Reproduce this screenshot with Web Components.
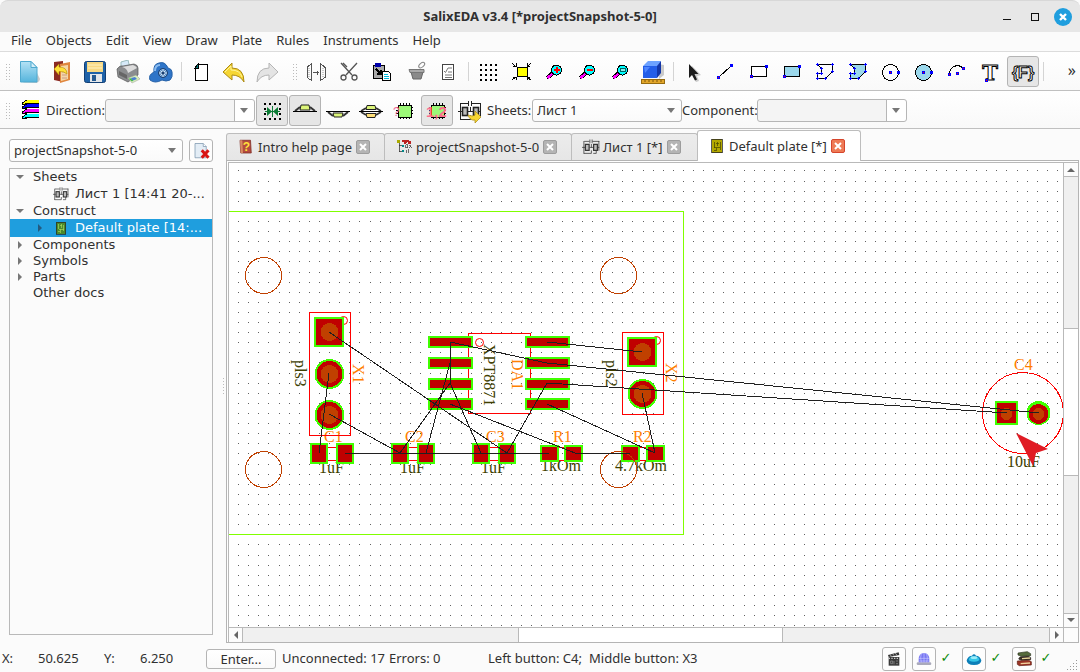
<!DOCTYPE html>
<html lang="en">
<head>
<meta charset="utf-8">
<title>SalixEDA v3.4</title>
<style>
  html, body { height: 100%; margin: 0; }
  body { background: #fbfbfb; color: #303030; font: 13px/18px "Noto Sans", sans-serif; overflow: hidden; }
</style>
</head>
<body>
<eda-app></eda-app>
<script>
const define = (name, css, html, init) => {
  const tpl = document.createElement('template');
  tpl.innerHTML = `<style>*{box-sizing:border-box}:host{display:block;box-sizing:border-box}button,select{font:inherit;color:inherit;margin:0;padding:0}${css}</style>`;
  customElements.define(name, class extends HTMLElement {
    constructor() { super(); this.attachShadow({ mode: 'open' }); }
    connectedCallback() {
      if (this.shadowRoot.childNodes.length) return;
      const t = tpl.cloneNode(true);
      t.innerHTML += typeof html === 'function' ? html(this) : html;
      this.shadowRoot.append(t.content.cloneNode(true));
      if (init) init(this, this.shadowRoot);
    }
  });
};

/* ---------- icons, on a 24 x 24 grid ---------- */
const crisp = 'shape-rendering="crispEdges"';
const node = (x, y, red) => `<rect x="${x - 1}" y="${y - 1}" width="3" height="3" fill="#00f"/>${red ? `<rect x="${x}" y="${y}" width="1" height="1" fill="#f00"/>` : ''}`;
const poly = fill => `<g ${crisp}><path d="M4.500 4.500H19.500V11.500L12.500 18.500H4.500V13.500H8.500V8.500Z" fill="${fill}" stroke="#000"/>` +
  [[4, 4], [19, 4], [19, 11], [12, 18], [4, 18], [4, 13], [8, 13], [8, 8]].map(([x, y]) => `<path d="M${x - 1} ${y}h3v1h-3zM${x} ${y - 1}h1v3h-1z" fill="#00f"/>`).join('') + '</g>';
const lens = inner => `<g ${crisp}><path d="M5 18l6-5" stroke="#000" stroke-width="4"/><path d="M5.500 18l5-4.500" stroke="#f0f" stroke-width="2.400"/><circle cx="14.500" cy="10" r="5" fill="#0ff" stroke="#000"/>${inner}</g>`;
const chip = t => `<g ${crisp}><path d="M8.500 4v16M11.500 4v16M14.500 4v16M17.500 4v16M4 8.500h17M4 11.500h17M4 14.500h17" stroke="#000"/><path d="M6 6.500h13.500v12h-13.500z" fill="#9cf878" stroke="#000"/></g>${t}`;
const sch = c => `<g fill="none" stroke="${c}"><path d="M3 4.500h7M14 4.500h9M10.500 2v5M13.500 2v5M2.500 4v17M22.500 4v13M2.500 20.500h10v-4M15 20.500h4v-4"/><rect x="4.500" y="8.500" width="5" height="8" fill="#bbb" stroke-width="1.600"/><rect x="15.500" y="8.500" width="5" height="8" fill="#bbb" stroke-width="1.600"/><path d="M0 12.500h4M10 12.500h5M21 12.500h2M12.500 8v5"/></g>`;
const plate = (a, b) => `<g ${crisp}><rect x="5" y="3" width="14" height="18" fill="${a}" stroke="#222"/><path d="M8.500 6v8h3v5M12 6v6M16 7v10M8 17.500h2M12 14.500h4M10 8.500h4" stroke="${b}" fill="none"/></g>`;
const dots = [4, 9, 14, 19].map(x => [4, 9, 14, 19].map(y => `<rect x="${x}" y="${y}" width="2" height="2"/>`).join('')).join('');
const ICONS = {
  new: `<defs><linearGradient id="g" x2="0" y2="1"><stop stop-color="#b5e2f5"/><stop offset="1" stop-color="#55b4dc"/></linearGradient></defs><path d="M6 22.500L20 23q3-2 3-4l-3-6z" fill="#999" opacity=".5"/><path d="M3.500 1.500H14l6 6V22H3.500z" fill="url(#g)" stroke="#4fa9cf"/><path d="M14 1.500v6h6z" fill="#d4eef9" stroke="#4fa9cf"/>`,
  open: `<path d="M4 2l9-1v21l-9-2z" fill="#8c2b23"/><path d="M10 4l10-2v18l-10 3z" fill="#e0863e"/><path d="M11 6l7-1v14l-7 2z" fill="#f4d7a5"/><path d="M12 12h5M12 15h5M12 18h5" stroke="#c98"/><path d="M4 9l5-5v3q8 0 8 7-3-3-8-2.500V15z" fill="#ffe13a" stroke="#b58a00" stroke-width=".6"/>`,
  save: `<rect x="1.500" y="1.500" width="21" height="21" rx="2" fill="#1f62a8" stroke="#123f74"/><path d="M4 2h16v10H4z" fill="#f7d984"/><path d="M5 5h14M5 8h14" stroke="#fff2c4"/><rect x="7" y="14" width="12" height="8" fill="#e3e7ea"/><rect x="9" y="15" width="4" height="6" fill="#255a90"/>`,
  print: `<path d="M5 8V2l7-2 2 8z" fill="#d6e9f8" stroke="#9bb"/><path d="M1 9q3-4 6-3l11-2q4 1 4 4v7l-10 7-10-5z" fill="#8b8d8f" stroke="#555" stroke-width=".7"/><path d="M6 7l11-2q3 1 4 3l-9 5q-1-5-6-6z" fill="#dcdcdc"/><path d="M3 11l8 4v4l-8-4z" fill="#666"/><path d="M12 18l8-3 4 4-8 4z" fill="#d7efb8" stroke="#999" stroke-width=".5"/><path d="M15 18l4-1 2 2-5 2z" fill="#4c80cf"/><path d="M13.500 18.500l3 2.500" stroke="#3db83d" stroke-width="1.500"/>`,
  cloud: `<path d="M1 20q-2-5 4-8-1-8 5-9 6-2 9 5 4 1 4 4 1 5-2 8-4 2-8 0-7 4-12 0z" fill="#2f75c8" stroke="#2762a8"/><path d="M6 11q0-6 5-6" stroke="#8abcf0" stroke-width="2" fill="none"/><circle cx="14" cy="13" r="4.500" fill="#5f93c8" stroke="#1c3f70"/><path d="M14 9v8M10 13h8M11.500 10.500l5 5M16.500 10.500l-5 5" stroke="#dce8f4"/><circle cx="14" cy="13" r="1.500" fill="#1c3f70"/>`,
  page: `<g ${crisp}><path d="M9.500 4.500H18V20.500H6V8z" fill="#fff" stroke="#000"/><path d="M6 8l3-4v4z" fill="#087878" stroke="#000"/></g>`,
  undo: `<path d="M1 12L10 3v5q12 0 12 14-4-7-12-7v5z" fill="#f6d634" stroke="#ad8a12"/><path d="M3 12l6-6v4q9 0 11 7" stroke="#fff49a" fill="none"/>`,
  redo: `<path d="M23 12L14 3v5Q2 8 2 22q4-7 12-7v5z" fill="#e4e4e4" stroke="#b5b5b5"/>`,
  mirror: `<g fill="none" stroke="#555" ${crisp}><path d="M7.500 3v18M7.500 3.500L3 7.500v10l4.500 3M16.500 3v18M16.500 3.500L21 7.500v10l-4.500 3M9 12.500h6M13.500 10.500v4"/></g><path d="M5 8v9M19 8v9" stroke="#999" stroke-dasharray="1 1"/>`,
  cut: `<g fill="none" stroke="#555" stroke-width="1.300"><path d="M4 3l11 12M20 3L9 15M6 3l4 4"/><circle cx="6.500" cy="17.500" r="2.500"/><circle cx="17.500" cy="17.500" r="2.500"/></g>`,
  paste: `<g ${crisp}><rect x="3.500" y="5.500" width="11" height="13" fill="#aaa" stroke="#000"/><rect x="5" y="3" width="6" height="4" fill="#00a"/><path d="M6 9l5 5M11 10v4h-4" stroke="#000" stroke-width="1.500" fill="none"/><path d="M12.500 11.500h6l2 2v7h-8z" fill="#fff" stroke="#000"/><path d="M14 14.500h4M14 16.500h5M14 18.500h5" stroke="#0bd"/></g>`,
  bin: `<path d="M8 12h12l-2 7H10z" fill="#8a8a8a" stroke="#666"/><path d="M6 9.500h15v3H7z" fill="#aaa" stroke="#777"/><ellipse cx="18.500" cy="5.500" rx="3.500" ry="2" fill="none" stroke="#888" transform="rotate(-40 18 5)"/>`,
  list: `<rect x="6.500" y="4.500" width="11" height="15" fill="#fff" stroke="#444"/><path d="M8 11l1.500 1.500L12 8M12 8h4M12 12h4M9 15h7M9 17.500h7" stroke="#777" fill="none"/>`,
  grid: `<g ${crisp}>${dots}</g>`,
  fit: `<g ${crisp}><rect x="8" y="7.500" width="10" height="9" fill="#ff0" stroke="#000"/><path d="M3 3l4 4M22 3l-4 4M3 20l4-3M22 20l-4-3" stroke="#000"/><path d="M4 6h3v-3M21 6h-3v-3M4 17h3v3M21 17h-3v3" stroke="#000" fill="none"/></g>`,
  zin: lens('<path d="M11.500 10h6M14.500 7v6" stroke="#f00" stroke-width="2"/>'),
  zout: lens('<path d="M11.500 10h6" stroke="#f00" stroke-width="2"/>'),
  zbox: lens('<rect x="12" y="8.500" width="5" height="3" fill="#8ee" stroke="#066"/>'),
  cube: `<path d="M17 4l6 1v10l-5 4z" fill="#999" opacity=".5"/><path d="M2 6l5-5h13l-3 5z" fill="#6da2ff"/><path d="M2 6h14v12H2z" fill="#245ee8"/><path d="M16 6l4-5v12l-4 5z" fill="#1437a8"/><path d="M3 7h6l-5 6z" fill="#4e86ff"/><rect x=".5" y="19.500" width="23" height="4" fill="#e2a62a" stroke="#966b10"/><path d="M4 20v2M8 20v2M12 20v2M16 20v2M20 20v2" stroke="#7c560c"/>`,
  cursor: `<path d="M11 6l9 9-4 1 2 5-3 1-3-5z" fill="#999" opacity=".5"/><path d="M8 4v14l3-3 3 5.500 2-1-2.500-5.500h4z" fill="#1c1c1c"/>`,
  line: `<g ${crisp}><path d="M4.500 17.500L17.500 5.500" stroke="#000"/>${node(4, 17, 1)}${node(17, 5)}</g>`,
  rect: `<g ${crisp}><rect x="4.500" y="6.500" width="15" height="10" fill="#fff" stroke="#000"/>${node(4, 16, 1)}${node(19, 6)}</g>`,
  frect: `<g ${crisp}><rect x="4.500" y="6.500" width="15" height="10" fill="#9bd8ec" stroke="#000"/>${node(4, 16, 1)}${node(19, 6)}</g>`,
  poly: poly('none'), fpoly: poly('#9bd8ec'),
  circ: `<g ${crisp}><circle cx="11.500" cy="12.500" r="8" fill="none" stroke="#000"/>${node(11, 12, 1)}${node(19, 12)}</g>`,
  fcirc: `<g ${crisp}><circle cx="11.500" cy="12.500" r="8" fill="#9bd8ec" stroke="#000"/>${node(11, 12, 1)}${node(19, 12)}</g>`,
  arc: `<g ${crisp}><path d="M4.500 14.500A8 8 0 0 1 18.500 8.500" fill="none" stroke="#000"/>${node(4, 14, 1)}${node(18, 8, 1)}${node(12, 13, 1)}</g>`,
  text: `<text x="12" y="20" text-anchor="middle" font-family="DejaVu Serif, serif" font-weight="bold" font-size="21" fill="#fff" stroke="#000">T</text><g ${crisp}>${node(8, 20, 1)}</g>`,
  field: `<text x="12" y="18" text-anchor="middle" font-family="Liberation Sans, sans-serif" font-weight="bold" font-size="16" fill="#fff" stroke="#000">{F}</text>`,
  layers: `<g ${crisp}>${[[14, '#0ff'], [9, '#f0f'], [4, '#00f'], [0, '#ff0']].map(([y, c]) => `<path d="M5 ${y + 5}L10 ${y + 1}H22V${y + 5}H9Z" fill="${c}"/><path d="M10 ${y + 1}L5 ${y + 4}v1h5l-2-1h14" fill="none" stroke="#000"/>`).join('')}</g>`,
  flip: `<g ${crisp}>${dots}</g><path d="M4 8h17v10h-17z" fill="#e6e6e6"/><path d="M7 8l5 4.500L7 17zM18 8l-5 4.500L18 17z" fill="#0a7a33"/><path d="M12.500 7v11M5 12.500h15" stroke="#0a7a33"/><g ${crisp}><path d="M4 9h2v2h-2zM4 14h2v2h-2zM19 9h2v2h-2zM19 14h2v2h-2z"/></g>`,
  top: `<path d="M2 12l5-4M22 12l-5-4" stroke="#333" stroke-width="2"/><path d="M7 11l1-5h8l1 5z" fill="#dcf57a" stroke="#222"/><path d="M0 12.500h24" stroke="#000"/>`,
  bottom: `<path d="M2 13l5 4M22 13l-5 4" stroke="#333" stroke-width="2"/><path d="M7 14h10l-1 4h-8z" fill="#dcf57a" stroke="#222"/><path d="M0 12.500h24" stroke="#000"/>`,
  both: `<path d="M2 12l5-3M22 12l-5-3M2 13l5 3M22 13l-5 3" stroke="#333" stroke-width="1.600"/><path d="M8 6.500h8l1 4h-10z" fill="#dcf57a" stroke="#222"/><path d="M7 14.500h10l-1 4h-8z" fill="#ffdf7a" stroke="#222"/><path d="M0 12.500h24" stroke="#000"/>`,
  chipq: chip('<text x="1" y="17" font-family="Liberation Sans, sans-serif" font-size="12" fill="#f06a9a">?</text>'),
  chip12: chip('<text x="1" y="18" font-family="Liberation Sans, sans-serif" font-size="15" font-weight="bold" fill="#ff6f8f">1,2</text>'),
  schgo: sch('#222') + '<path d="M10 16q5 2 7 0v-4l6 6-6 6v-3q-5 1-7-5z" fill="#f6d634" stroke="#a8860e" stroke-width=".7"/>',
  sch: sch('#333'),
  plate: plate('#b3a800', '#4a4a00'), platedim: plate('#4c8a2c', '#a8d860'),
  help: `<path d="M4 3h14l1 17H5z" fill="#b54c3e" stroke="#7a2a22"/><path d="M4 3h3l1 17H5z" fill="#d98b62"/><text x="12.500" y="17" text-anchor="middle" font-family="Liberation Sans, sans-serif" font-weight="bold" font-size="16" fill="#ffe23a">?</text>`,
  proj: `<g ${crisp}><path d="M5.500 4v14M5.500 10.500h5M5.500 17.500h5" stroke="#333" fill="none"/><rect x="3" y="3" width="4" height="3" fill="#aa0"/><path d="M9 4h4v4M15 7v-3h3v4M20 4v4" stroke="#b22" stroke-width="2" fill="none"/><rect x="9" y="9" width="3" height="3" fill="#088"/><path d="M14 9v4h3v-4zM19 9l3 4M22 9l-3 4M15 16v4M18 15v5" stroke="#444" fill="none"/><rect x="9" y="16" width="3" height="3" fill="#088"/></g>`,
  delsheet: `<path d="M4 2h11l4 4v15H4z" fill="#e3edf6" stroke="#7c95ad"/><path d="M15 2v4h4" fill="#fff" stroke="#7c95ad"/><path d="M13 11l9 10M22 11l-9 10" stroke="#d81414" stroke-width="4"/>`,
  film: `<path d="M3 6L19 2l1 4L4 9z" fill="#333"/><path d="M6 5l2 3M10 4l2 3M14 3l2 3" stroke="#ddd"/><rect x="4" y="9" width="16" height="13" fill="#3a3a3a"/><path d="M4 11h16" stroke="#ccc" stroke-dasharray="2 2" stroke-width="2"/><path d="M7 15h3v4h-3zM12 15v5M15 15h3M15 19h3" stroke="#999" fill="none"/>`,
  net: `<rect x="1" y="17" width="22" height="4" rx="2" fill="#aab"/><path d="M4 17v-4q0-10 8-10t8 10v4z" fill="#7776f2"/><path d="M4 11h16M5 15h14M12 3v14M8 4q-2 6 0 13M16 4q2 6 0 13" stroke="#c9c9ff" fill="none"/>`,
  gem: `<path d="M1 14q2-7 8-7 3-4 6 0 6 0 8 7 0 7-11 7T1 14z" fill="#0d7fb8"/><path d="M4 12q2-4 6-4h4q4 0 6 4 0 4-8 4t-8-4z" fill="#35c6e8"/><ellipse cx="12" cy="10" rx="5" ry="2" fill="#9becf8"/>`,
  books: `<path d="M3 3l14-2 5 3v3l-14 1-5-2z" fill="#566b3d" stroke="#2d3520"/><path d="M6 9l13-1 3 2v3L8 14l-4-2z" fill="#3b3026" stroke="#1f1812"/><path d="M9 11.500l12-1" stroke="#e9d59b" stroke-width="2"/><path d="M2 15l17-1 4 2v5l-18 1-3-2z" fill="#9c3526" stroke="#5d1c12"/><path d="M7 19l14-1" stroke="#efcf9b" stroke-width="2"/>`
};
define('eda-icon', ':host{flex:none;width:24px;height:24px}:host([small]){width:16px;height:16px}:host([mid]){width:18px;height:18px}svg{display:block;width:100%;height:100%}',
  el => `<svg viewBox="0 0 24 24" aria-hidden="true">${ICONS[el.getAttribute('name')]}</svg>`);

/* ---------- window chrome ---------- */
define('eda-titlebar', `:host{display:grid;grid-template-columns:1fr auto 1fr;align-items:center;height:32px;background:#e7e7e7;border-top:1px solid #d8d8d8;border-radius:8px 8px 0 0}
  h1{grid-column:2;margin:0;padding-bottom:2px;font:bold 13px/18px "Noto Sans",sans-serif}
  nav{display:flex;justify-content:flex-end;gap:10px;padding-right:8px}
  button{width:18px;height:18px;border:0;background:none;display:block}svg{display:block}`,
  `<h1><slot></slot></h1><nav>
  <button aria-label="Minimize"><svg width="18" height="18"><path d="M5 11.500h8" stroke="#111"/></svg></button>
  <button aria-label="Maximize"><svg width="18" height="18"><rect x="5.500" y="5.500" width="7" height="7" fill="none" stroke="#111"/></svg></button>
  <button aria-label="Close"><svg width="18" height="18"><circle cx="9" cy="9" r="9" fill="#1f9ede"/><path d="M6 6l6 6M12 6l-6 6" stroke="#fff" stroke-width="2.400"/></svg></button></nav>`);

define('eda-menubar', `:host{display:flex;height:20px;padding-left:4px;background:#fbfbfb;border-bottom:1px solid #dcdcdc}
  button{border:0;background:none;padding:0 7px;line-height:16px;height:18px;padding-bottom:2px}`,
  el => el.getAttribute('items').split(',').map(t => `<button>${t}</button>`).join(''));

define('eda-toolbar', ':host{display:flex;align-items:flex-start;height:39px;padding-top:4px;background:linear-gradient(#fff,#f9f9f9);border-bottom:1px solid #c0c0c0}:host([second]){height:38px}', '<slot></slot>');
define('eda-grip', ':host{width:13px;height:31px;display:flex;align-items:center;padding-left:5px}:host([mid]){width:16px;padding-left:8px}i{width:5px;height:17px;background:radial-gradient(circle,#bbb 1px,transparent 1px) 0 0/3px 3px}', '<i></i>');
define('eda-sep', ':host{width:7px;height:31px;padding:6px 3px}i{display:block;width:1px;height:19px;background:#d4d4d4}', '<i></i>');
define('eda-tool', `:host{flex:none;margin-right:1px}button{display:block;width:32px;height:31px;padding:2px 3px;border:1px solid transparent;border-radius:3px;background:none}
  :host([on]) button{background:#e6e6e6;border-color:#b4b4b4}`,
  el => `<button aria-label="${el.getAttribute('icon')}"><eda-icon name="${el.getAttribute('icon')}"></eda-icon></button>`);

define('eda-combo', `:host{display:flex;align-items:center;height:31px}
  label{flex:none;width:var(--label,0);white-space:nowrap;padding-bottom:2px}
  div{position:relative;width:var(--field,150px);height:23px;flex:auto}
  select{appearance:none;width:100%;height:100%;border:1px solid #b6b6b6;border-radius:3px;background:linear-gradient(#fff,#fafafa);padding:0 20px 2px 4px;line-height:18px}
  :host([editable]) select{background:linear-gradient(90deg,#f4f4f4 calc(100% - 20px),#b6b6b6 calc(100% - 20px),#b6b6b6 calc(100% - 19px),#fff calc(100% - 19px))}
  svg{position:absolute;right:7px;top:9px;pointer-events:none}`,
  el => `${el.hasAttribute('label') ? `<label for="s">${el.getAttribute('label')}</label>` : ''}<div><select id="s" aria-label="${el.getAttribute('label') || 'Project'}"><option>${el.getAttribute('value') || ''}</option></select><svg width="8" height="5"><path d="M0 0h8L4 5z" fill="#777"/></svg></div>`);

/* ---------- project tree ---------- */
define('eda-tree', ':host{border:1px solid #b9b9b9;overflow:hidden;font:13px/16px "DejaVu Sans",sans-serif}', '<slot></slot>');
define('eda-tree-row', `:host{display:flex;align-items:center;height:16px;padding-left:6px;white-space:nowrap}
  :host([leaf]){height:18px;padding-left:26px}:host([on]){background:#1f9ede;color:#fff}
  .a{flex:none;width:8px;height:8px;margin-right:9px}.a svg{display:block}
  eda-icon{margin-right:6px}`,
  el => { const s = el.getAttribute('state'), c = el.hasAttribute('on') ? '#235a80' : '#777', i = el.getAttribute('icon');
    return `<span class="a">${s ? `<svg width="8" height="8"><path d="${s === 'open' ? 'M0 2h8L4 6z' : 'M2 0v8l4-4z'}" fill="${c}"/></svg>` : ''}</span>${i ? `<eda-icon small name="${i}"></eda-icon>` : ''}<span><slot></slot></span>`; });

/* ---------- tabs ---------- */
define('eda-tabs', ':host{display:flex;align-items:flex-end;height:31px;flex:none;border-bottom:1px solid #b4b4b4}', '<slot></slot>');
define('eda-tab', `:host{display:flex;align-items:center;flex:none;height:27px;width:var(--w);padding-left:10px;margin-left:-1px;border:1px solid #bdbdbd;border-bottom:0;border-radius:3px 3px 0 0;background:linear-gradient(#ececec,#e6e6e6)}
  :host(:first-child){margin-left:0}:host([on]){height:31px;background:#fff;margin-bottom:-1px}
  button{border:0;background:none;display:flex;align-items:center;white-space:nowrap;gap:3px}
  .x{width:14px;height:14px;margin-left:4px;border-radius:2px;background:#b4b4b4;border:1px solid #9c9c9c;justify-content:center}
  :host([on]) .x{background:#ee7a55;border-color:#d6452c}`,
  el => `<button role="tab"><eda-icon mid name="${el.getAttribute('icon')}"></eda-icon><slot></slot></button><button class="x" aria-label="Close tab"><svg width="8" height="8"><path d="M1 1l6 6M7 1l-6 6" stroke="#fff" stroke-width="2"/></svg></button>`);

/* ---------- scroll bars ---------- */
define('eda-scroll', `:host{display:flex;background:#f0f0f0;border:0 solid #b9b9b9}
  :host([dir=h]){border-top-width:1px;height:15px}:host([dir=v]){flex-direction:column;border-left-width:1px;width:15px}
  b{flex:none;width:14px;height:14px;background:#fcfcfc;display:grid;place-items:center}
  i{flex:var(--a) 0 0}i.e{flex:var(--c) 0 0}u{flex:var(--b) 0 0;background:#fff}
  b,i,i.e,u{border:0 solid #b9b9b9}:host([dir=h]) :is(b:first-of-type,i:not(.e),u){border-right-width:1px}:host([dir=h]) b:last-of-type{border-left-width:1px}
  :host([dir=v]) :is(b:first-of-type,i:not(.e),u){border-bottom-width:1px}:host([dir=v]) b:last-of-type{border-top-width:1px}`,
  el => { const h = el.getAttribute('dir') === 'h', a = d => `<b><svg width="8" height="8"><path d="${d}" fill="#666"/></svg></b>`;
    return `${a(h ? 'M6 0v8L2 4z' : 'M0 6h8L4 2z')}<i></i><u></u><i class="e"></i>${a(h ? 'M2 0v8l4-4z' : 'M0 2h8L4 6z')}`; });

const RED = '#c00000', GREEN = '#40ff00', CORE = '#c04000';
const pad = (x, y, w, h) => `<rect x="${x}" y="${y}" width="${w}" height="${h}" fill="${GREEN}"/><rect x="${x + 2}" y="${y + 2}" width="${w - 4}" height="${h - 4}" fill="${RED}"/>`;
const disc = (x, y, r, f) => `<circle cx="${x}.5" cy="${y}" r="${r}" fill="${f}"/>`;
const silk = (x, y, w, h) => `<rect x="${x}.5" y="${y}.5" width="${w}" height="${h}" fill="none" stroke="#f00"/>`;
const ring = (x, y, r, c) => `<circle cx="${x}.5" cy="${y}.5" r="${r}" fill="none" stroke="${c}"${r < 9 ? ' shape-rendering="auto"' : ''}/>`;
const wire = p => `<polyline points="${p}" fill="none" stroke="#202020"/>`;
const txt = (x, y, s, c, rot) => `<text transform="translate(${x} ${y})${rot ? ' rotate(90)' : ''}" fill="${c === 'n' ? '#ff8000' : '#404000'}">${s}</text>`;
define('eda-board', ':host{background:#fff;overflow:hidden;min-width:0;min-height:0}svg{display:block;width:100%;height:100%}text{font:16px "Liberation Serif",serif}', () => {
  let grid = '';
  for (let j = 0; j < 120; j++) for (let i = 0; i < 200; i++) grid += `M${238 + Math.floor(.6 + i * 10.11)} ${170 + Math.floor(.9 + j * 10.11)}h1v1h-1z`;
  const sq = (x, y) => pad(x - 15, y - 15, 30, 30) + disc(x, y, 9, CORE);
  const rd = (x, y) => disc(x, y, 15, GREEN) + disc(x, y, 13, RED) + disc(x, y, 9, CORE);
  return `<svg role="img" aria-label="Default plate"><g transform="translate(-229 -163)">
  <g ${crisp}><path d="${grid}" fill="#606060"/>
  <path d="M229 211.500H683.500V534.500H229" fill="none" stroke="#80ff00"/></g>
  <g>${txt(295, 360, 'pls3', 'v', 1)}${txt(353, 364, 'X1', 'n', 1)}${txt(484, 344, 'XPT8871', 'v', 1)}${txt(512, 359, 'DA1', 'n', 1)}${txt(606, 360, 'pls2', 'v', 1)}${txt(666, 363, 'X2', 'n', 1)}
  ${txt(324, 442, 'C1', 'n')}${txt(405, 442, 'C2', 'n')}${txt(486, 442, 'C3', 'n')}${txt(553, 442, 'R1', 'n')}${txt(633, 442, 'R2', 'n')}${txt(1014, 370, 'C4', 'n')}
  ${txt(319, 473, '1uF', 'v')}${txt(400, 473, '1uF', 'v')}${txt(481, 473, '1uF', 'v')}${txt(541, 471, '1kOm', 'v')}${txt(615, 471, '4.7kOm', 'v')}${txt(1007, 467, '10uF', 'v')}</g>
  <g ${crisp}>${silk(309, 312, 41, 123)}${ring(343, 320, 4, '#f00')}${silk(622, 332, 41, 82)}${ring(656, 340, 4, '#f00')}${silk(468, 333, 62, 80)}${ring(479, 342, 4, '#f00')}
  ${[319, 400, 481, 549, 631].map(x => silk(x, 447, 26, 13)).join('')}
  <circle cx="1023" cy="413" r="40.500" fill="none" stroke="#f00"/>
  ${sq(329, 332)}${rd(329, 374)}${rd(329, 415)}${sq(642, 352)}${rd(642, 394)}
  ${[336, 357, 378, 398].map(y => pad(428, y, 45, 12) + pad(525, y, 45, 12)).join('')}
  ${[310, 336, 391, 417, 472, 498].map(x => pad(x, 443, 18, 21)).join('')}
  ${[540, 564, 621, 646].map(x => pad(x, 445, 19, 17)).join('')}
  ${pad(995, 401, 23, 24)}${disc(1006, 414, 6, CORE)}${disc(1038, 413, 12, GREEN)}${disc(1038, 414, 10, RED)}${disc(1038, 414, 6, CORE)}
  ${ring(263, 275, 18, CORE)}${ring(618, 275, 18, CORE)}${ring(263, 469, 18, CORE)}${ring(618, 469, 18, CORE)}
  ${wire('329,332 507,453')}${wire('329,373 319,453')}${wire('329,414 400,453')}${wire('345,453.5 549,453.5')}${wire('575,453.5 630,453.5')}
  ${wire('450,383 450,342 547,363 1039,413')}${wire('547,383 1007,413')}${wire('450,363 426,453')}${wire('400,453 450,383 481,453')}${wire('450,404 575,453')}
  ${wire('547,342 642,352')}${wire('547,383 507,453')}${wire('547,404 655,453')}${wire('642,393 655,453')}</g>
  <path d="M1016 433L1048 449L1036 453L1033 466Z" fill="#e01b24"/></g></svg>`;
});

/* ---------- status bar ---------- */
define('eda-statusbar', `:host{display:flex;align-items:center;height:29px;padding:3px 0 0 2px;flex:none;white-space:nowrap}
  span{flex:none;padding-bottom:2px}.l{width:36px}.v{width:66px}
  .enter{width:70px;height:20px;line-height:16px;border:1px solid #b4b4b4;border-radius:3px;background:linear-gradient(#fff,#fafafa);margin-right:6px}
  .un{width:107px}.er{width:99px}.lb{width:101px}.sp{flex:1}
  .ib{width:24px;height:24px;border:1px solid #b4b4b4;border-radius:3px;background:#fdfdfd;display:grid;place-items:center;margin-left:6px}
  .ok{width:20px;text-align:center;color:#0a8a0a;font:bold 13px/18px "DejaVu Sans",sans-serif}
  .g{width:11px;height:11px;margin:12px 2px 0 11px}`,
  `<span class="l">X:</span><span class="v">50.625</span><span class="l">Y:</span><span class="v">6.250</span><button class="enter">Enter...</button>
  <span class="un">Unconnected: 17</span><span class="er">Errors: 0</span><span class="lb">Left button: C4;</span><span>Middle button: X3</span><span class="sp"></span>
  <button class="ib" aria-label="Movie"><eda-icon small name="film"></eda-icon></button><button class="ib" aria-label="Network"><eda-icon small name="net"></eda-icon></button><span class="ok">✓</span>
  <button class="ib" aria-label="Cloud"><eda-icon small name="gem"></eda-icon></button><span class="ok">✓</span><button class="ib" aria-label="Library"><eda-icon small name="books"></eda-icon></button><span class="ok">✓</span>
  <svg class="g" ${crisp}><path d="M9 0h1v1h-1zM6 3h1v1h-1zM9 3h1v1h-1zM3 6h1v1h-1zM6 6h1v1h-1zM9 6h1v1h-1zM0 9h1v1h-1zM3 9h1v1h-1zM6 9h1v1h-1zM9 9h1v1h-1z" fill="#999"/></svg>`);

/* ---------- whole window ---------- */
const tools = s => s.split(' ').map(n => n === '|' ? '<eda-sep></eda-sep>' : n === ':' ? '<eda-grip mid></eda-grip>' : `<eda-tool icon="${n.replace('!', '')}"${n.includes('!') ? ' on' : ''}></eda-tool>`).join('');
define('eda-app', `:host{display:flex;flex-direction:column;height:100vh}
  main{flex:1;display:flex;min-height:0}
  aside{width:204px;margin:10px 0 8px 9px;display:flex;flex-direction:column;flex:none}
  .pick{display:flex;gap:6px;height:23px;margin-bottom:6px}.pick eda-combo{--field:174px;height:23px;flex:1}
  .del{width:24px;height:23px;border:1px solid #b4b4b4;border-radius:3px;background:#fdfdfd;display:grid;place-items:center}
  eda-tree{flex:1}
  .split{width:13px;display:grid;place-items:center}.split i{width:1px;height:17px;margin-left:8px;background:repeating-linear-gradient(#bbb 0 1px,transparent 1px 3px)}
  .work{flex:1;min-width:0;display:flex;flex-direction:column;margin-right:1px;padding-top:1px}
  .frame{flex:1;min-height:0;border:1px solid #b4b4b4;border-top:0;padding:1px 0 0 1px;display:flex;background:#fff}
  .view{flex:1;min-width:0;display:grid;grid-template:1fr 15px / 1fr 15px;border:1px solid #b9b9b9;border-width:1px 0 0 1px}
  .more{margin-left:auto;padding:0 4px 3px 0;border:0;background:none;height:31px;font-size:16px}
  .corner{border:1px solid #b9b9b9;border-width:1px 0 0 1px;background:#fcfcfc}
  .c1{margin-right:1px}`,
  `<eda-titlebar>SalixEDA v3.4 [*projectSnapshot-5-0]</eda-titlebar>
  <eda-menubar items="File,Objects,Edit,View,Draw,Plate,Rules,Instruments,Help"></eda-menubar>
  <eda-toolbar><eda-grip></eda-grip>${tools('new open save print cloud | page undo redo : mirror cut paste bin list | grid fit zin zout zbox cube | cursor line rect frect poly fpoly circ fcirc arc text field! |')}<button class="more">»</button></eda-toolbar>
  <eda-toolbar second><eda-grip></eda-grip>${tools('layers')}<eda-combo class="c1" label="Direction:" editable style="--label:59px"></eda-combo>${tools('flip! top! bottom both chipq chip12! schgo')}<eda-combo label="Sheets:" value="Лист 1" style="--label:45px"></eda-combo><eda-combo label="Component:" editable style="--label:75px"></eda-combo></eda-toolbar>
  <main><aside><div class="pick"><eda-combo value="projectSnapshot-5-0"></eda-combo><button class="del" aria-label="Delete"><eda-icon mid name="delsheet"></eda-icon></button></div>
  <eda-tree role="tree"><eda-tree-row state="open">Sheets</eda-tree-row><eda-tree-row leaf icon="sch">Лист 1 [14:41 20-...</eda-tree-row><eda-tree-row state="open">Construct</eda-tree-row><eda-tree-row leaf on state="shut" icon="platedim">Default plate [14:...</eda-tree-row><eda-tree-row state="shut">Components</eda-tree-row><eda-tree-row state="shut">Symbols</eda-tree-row><eda-tree-row state="shut">Parts</eda-tree-row><eda-tree-row>Other docs</eda-tree-row></eda-tree></aside>
  <div class="split"><i></i></div>
  <div class="work"><eda-tabs role="tablist"><eda-tab icon="help" style="--w:159px">Intro help page</eda-tab><eda-tab icon="proj" style="--w:188px">projectSnapshot-5-0</eda-tab><eda-tab icon="sch" style="--w:127px">Лист 1 [*]</eda-tab><eda-tab on icon="plate" style="--w:164px">Default plate [*]</eda-tab></eda-tabs>
  <div class="frame"><div class="view"><eda-board></eda-board><eda-scroll dir="v" style="--a:152;--b:146;--c:138"></eda-scroll><eda-scroll dir="h" style="--a:276;--b:263;--c:267"></eda-scroll><div class="corner"></div></div></div></div></main>
  <eda-statusbar></eda-statusbar>`);
</script>
</body>
</html>
